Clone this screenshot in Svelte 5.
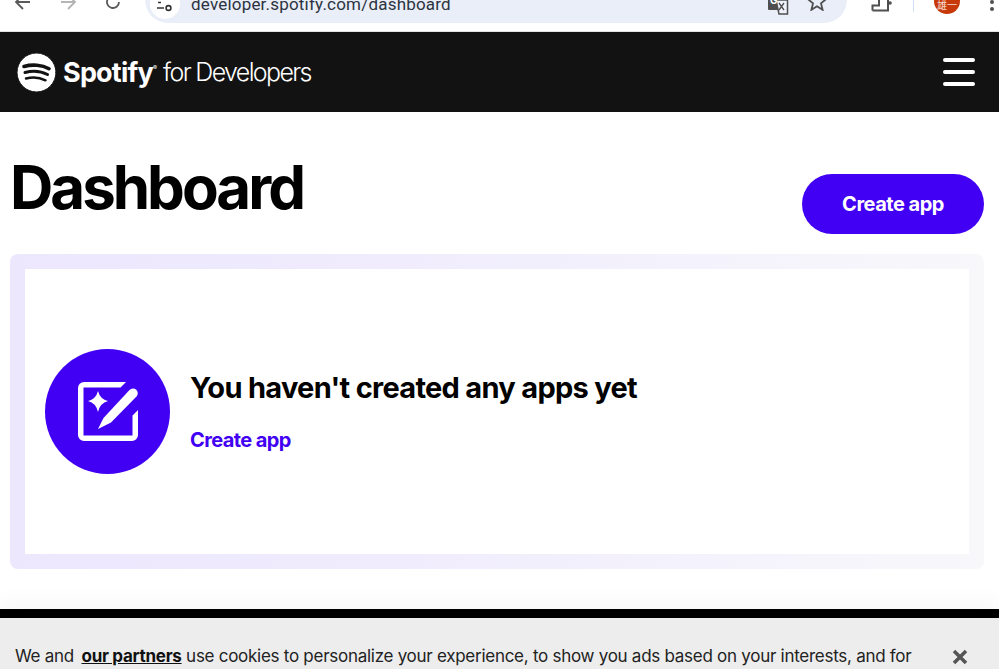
<script>
  const url = 'developer.spotify.com/dashboard';
</script>

<div class="window">
  <header class="chrome">
    <button class="nav-btn back" aria-label="Back">
      <svg viewBox="0 0 18 18" width="18" height="18"><path d="M16 9H3m6-7-7 7 7 7" /></svg>
    </button>
    <button class="nav-btn forward" aria-label="Forward">
      <svg viewBox="0 0 18 18" width="18" height="18"><path d="M2 9h13M9 2l7 7-7 7" /></svg>
    </button>
    <button class="nav-btn reload" aria-label="Reload">
      <svg viewBox="0 0 18 18" width="18" height="18"><path d="M15 9a6 6 0 1 1-1.800-4.300M15 1v4.500h-4.500" /></svg>
    </button>
    <div class="omnibox">
      <span class="site-icon">
        <svg viewBox="0 0 18 12" width="18" height="12"><path d="M2 1.500h3M1 7h7" /><circle cx="12.500" cy="7" r="2.400" /></svg>
      </span>
      <span class="url">{url}</span>
      <svg class="translate" viewBox="0 0 22 22" width="22" height="22">
        <rect x="1" y="1" width="13" height="16" rx="1" fill="#4f4f4f" />
        <path d="M9 7h11.500v14H12z" fill="#eef2fa" stroke="#4f4f4f" stroke-width="1.500" />
        <text x="3" y="11" class="translate-g">G</text>
        <path d="M12 10l5 7m0-7l-5 7" fill="none" stroke="#4f4f4f" stroke-width="1.300" />
      </svg>
      <svg class="star" viewBox="0 0 20 20" width="20" height="20">
        <path d="M10 1.500l2.500 6.200 6.500.5-5 4.200 1.600 6.400L10 15.200l-5.600 3.600L6 12.400 1 8.200l6.500-.5z" />
      </svg>
    </div>
    <svg class="extension" viewBox="0 0 22 12" width="22" height="12">
      <path d="M2.500 10.500V5.500H9V0M18 0V10.500H2.500" />
      <circle cx="20" cy="3" r="1.800" />
    </svg>
    <span class="divider"></span>
    <span class="avatar">雄一</span>
    <span class="menu-dots"><i></i><i></i></span>
  </header>

  <nav class="topbar">
    <a class="brand" href="#top">
      <svg class="logo" viewBox="0 0 39 39" width="39" height="39">
        <circle cx="19.500" cy="19.500" r="19.500" fill="#fff" />
        <path d="M7 13.500c8-2.400 18-1.800 25 2.200" stroke-width="3.600" />
        <path d="M8 19.500c7-2 16-1.500 22.500 2" stroke-width="3" />
        <path d="M9 25.500c6-1.500 13.500-1.200 19.500 1.800" stroke-width="2.500" />
      </svg>
      <span class="wordmark">Spotify<sup>®</sup></span>
      <span class="for-dev">for Developers</span>
    </a>
    <button class="hamburger" aria-label="Menu"><i></i><i></i><i></i></button>
  </nav>

  <main class="page">
    <div class="page-head">
      <h1>Dashboard</h1>
      <button class="create-btn">Create app</button>
    </div>

    <section class="card">
      <div class="card-inner">
        <div class="badge">
          <svg viewBox="0 0 60 60" width="60" height="60">
            <path d="M48 0H6a6 6 0 0 0-6 6v47a6 6 0 0 0 6 6h48a6 6 0 0 0 6-6V28l-5.500 5.500V53.500H5.500V5.500H42.500z" />
            <path d="M20 47l5.500-11L51.500 8a4.500 4.500 0 0 1 7 6.500L33 40.500z" />
            <path d="M20 9q2 8 10 10-8 2-10 11-2-9-10-11 8-2 10-10z" />
          </svg>
        </div>
        <div class="empty-copy">
          <h2>You haven't created any apps yet</h2>
          <a class="create-link" href="#top">Create app</a>
        </div>
      </div>
    </section>
  </main>

  <aside class="cookie-banner">
    <p>We and <a href="#top">our partners</a> use cookies to personalize your experience, to show you ads based on your interests, and for</p>
    <button class="cookie-close" aria-label="Close">
      <svg viewBox="0 0 16 16" width="16" height="16"><path d="M2 2l12 12M14 2L2 14" /></svg>
    </button>
  </aside>
</div>

<style>
  :global(body) {
    margin: 0;
    background: #fff;
  }

  .window {
    position: relative;
    width: 999px;
    height: 669px;
    overflow: hidden;
    font-family: Inter, "Liberation Sans", sans-serif;
    color: #000;
  }

  button {
    border: 0;
    padding: 0;
    background: none;
    font: inherit;
  }

  /* browser toolbar, cut off at the top of the shot */
  .chrome {
    display: flex;
    align-items: flex-end;
    height: 31px;
    overflow: hidden;
    border-bottom: 1px solid #e3e3e3;
    background: #fff;
  }

  .nav-btn {
    display: flex;
    flex: none;
    width: 18px;
    height: 18px;
    margin-bottom: 20px;
  }

  .nav-btn svg path {
    fill: none;
    stroke: #5a5a5a;
    stroke-width: 1.8;
  }

  .back { margin-left: 14px; }
  .forward { margin-left: 27px; }
  .forward svg path { stroke: #b4b4b4; }
  .reload { margin-left: 27px; }

  .omnibox {
    display: flex;
    flex: none;
    align-items: center;
    width: 702px;
    height: 46px;
    margin-left: 23px;
    margin-bottom: 8px;
    border-radius: 23px;
    background: #e9eef8;
  }

  .site-icon {
    display: flex;
    flex: none;
    align-items: flex-end;
    justify-content: center;
    width: 30px;
    height: 30px;
    margin-left: 5px;
    margin-top: 8px;
    padding-bottom: 6px;
    border-radius: 50%;
    background: #fff;
    box-sizing: border-box;
  }

  .site-icon svg {
    fill: none;
    stroke: #333;
    stroke-width: 1.6;
  }

  .url {
    flex: 1;
    margin-left: 11px;
    margin-top: 8px;
    font: 17px Roboto, "Liberation Sans", sans-serif;
    letter-spacing: 0.2px;
    color: #2c3340;
  }

  .translate {
    flex: none;
    margin-top: 8px;
    margin-right: 18px;
  }

  .translate-g {
    fill: #fff;
    font-size: 10px;
    font-weight: 700;
  }

  .star {
    flex: none;
    margin-top: 1px;
    margin-right: 20px;
    fill: none;
    stroke: #4f4f4f;
    stroke-width: 1.8;
  }

  .extension {
    flex: none;
    margin-left: 23px;
    margin-bottom: 19px;
    fill: none;
    stroke: #4f4f4f;
    stroke-width: 2;
  }

  .extension circle {
    fill: #4f4f4f;
    stroke: none;
  }

  .divider {
    flex: none;
    width: 1px;
    height: 12px;
    margin-left: 21px;
    margin-bottom: 19px;
    background: #cfe0f7;
  }

  .avatar {
    flex: none;
    width: 26px;
    height: 26px;
    margin-left: 20px;
    margin-bottom: 17px;
    border-radius: 50%;
    background: #c8390a;
    color: #f5d9cd;
    font: 10px/34px "Noto Sans CJK JP", sans-serif;
    text-align: center;
  }

  .menu-dots {
    display: flex;
    flex: none;
    flex-direction: column;
    gap: 3px;
    margin-left: 30px;
    margin-bottom: 20px;
  }

  .menu-dots i {
    width: 4px;
    height: 4px;
    border-radius: 50%;
    background: #4f4f4f;
  }

  .topbar {
    display: flex;
    align-items: center;
    justify-content: space-between;
    height: 80px;
    padding: 0 24px 0 17px;
    background: #121212;
  }

  .brand {
    display: flex;
    align-items: center;
    color: #fff;
    text-decoration: none;
  }

  .logo {
    flex: none;
    fill: none;
    stroke: #121212;
    stroke-linecap: round;
  }

  .wordmark {
    margin-left: 7px;
    font-size: 27px;
    font-weight: 700;
    letter-spacing: -0.8px;
  }

  .wordmark sup {
    font-size: 6px;
    font-weight: 400;
    vertical-align: 12px;
    line-height: 0;
  }

  .for-dev {
    margin-left: 7px;
    font-size: 25px;
    font-weight: 300;
    letter-spacing: -1.65px;
  }

  .hamburger {
    display: flex;
    flex-direction: column;
    gap: 8px;
    width: 32px;
  }

  .hamburger i {
    height: 4px;
    border-radius: 2px;
    background: #fff;
  }

  .page {
    padding: 0 15px 0 10px;
  }

  .page-head {
    display: flex;
    align-items: flex-start;
    justify-content: space-between;
    height: 142px;
    padding-top: 40px;
    box-sizing: border-box;
  }

  h1 {
    margin: 0;
    font-size: 60px;
    font-weight: 700;
    line-height: 70px;
    letter-spacing: -3px;
  }

  .create-btn {
    width: 182px;
    height: 60px;
    margin-top: 22px;
    border-radius: 30px;
    background: #4100f4;
    color: #fff;
    font-size: 20px;
    font-weight: 700;
    letter-spacing: -0.5px;
  }

  .card {
    padding: 15px;
    border-radius: 8px;
    background: linear-gradient(90deg, #ece7fd 0%, #f0ecfd 40%, #f8f8fb 100%);
  }

  .card-inner {
    display: flex;
    align-items: center;
    gap: 20px;
    height: 285px;
    padding-left: 20px;
    background: #fff;
  }

  .badge {
    display: flex;
    flex: none;
    align-items: center;
    justify-content: center;
    width: 125px;
    height: 125px;
    border-radius: 50%;
    background: #4100f4;
  }

  .badge svg {
    fill: #fff;
  }

  h2 {
    margin: 0;
    font-size: 29px;
    font-weight: 700;
    line-height: 34px;
    letter-spacing: -0.7px;
  }

  .create-link {
    display: block;
    margin-top: 23px;
    color: #4100f4;
    font-size: 20px;
    font-weight: 700;
    letter-spacing: -0.6px;
    line-height: 24px;
    text-decoration: none;
  }

  .cookie-banner {
    position: absolute;
    left: 0;
    right: 0;
    top: 609px;
    display: flex;
    justify-content: space-between;
    height: 200px;
    padding: 27px 31px 0 15px;
    border-top: 9px solid #000;
    background: #ededed;
    box-shadow: 0 -8px 20px rgba(0, 0, 0, 0.03);
    box-sizing: border-box;
  }

  .cookie-banner p {
    margin: 0;
    font-size: 17px;
    line-height: 22px;
    letter-spacing: -0.27px;
    color: #222;
  }

  .cookie-banner a {
    margin-left: 3px;
    color: #111;
    font-weight: 700;
  }

  .cookie-close {
    display: flex;
    flex: none;
    height: 16px;
    margin-top: 4px;
  }

  .cookie-close path {
    stroke: #555;
    stroke-width: 3.5;
    fill: none;
  }
</style>
